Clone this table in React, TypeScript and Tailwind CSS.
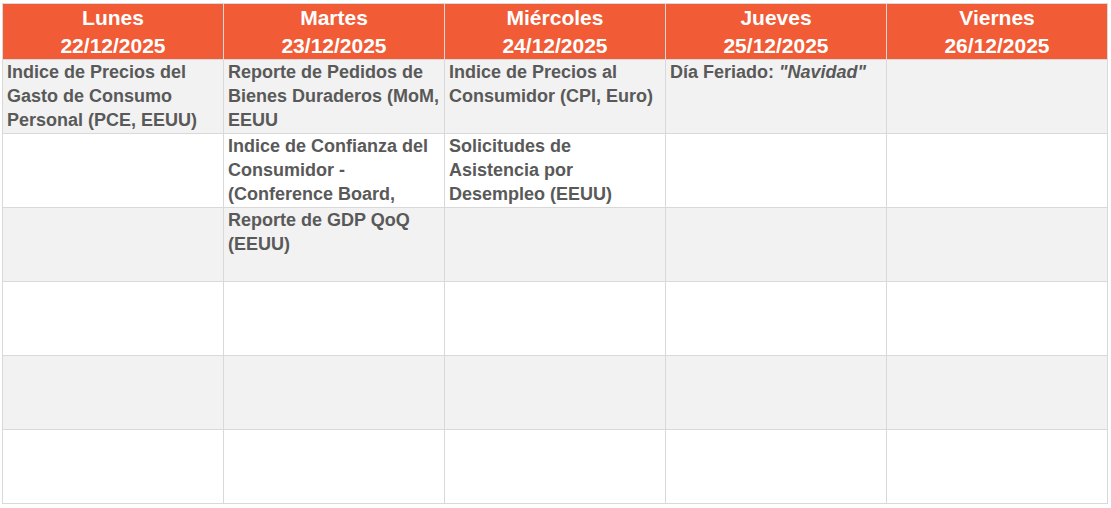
import { Fragment, type ReactNode } from "react";

type Day = { name: string; date: string };

const days: Day[] = [
  { name: "Lunes", date: "22/12/2025" },
  { name: "Martes", date: "23/12/2025" },
  { name: "Miércoles", date: "24/12/2025" },
  { name: "Jueves", date: "25/12/2025" },
  { name: "Viernes", date: "26/12/2025" },
];

// each cell is a list of lines, kept as in the sheet (cut off text included)
const rows: ReactNode[][][] = [
  [
    ["Indice de Precios del", "Gasto de Consumo", "Personal (PCE, EEUU)"],
    ["Reporte de Pedidos de", "Bienes Duraderos (MoM,", "EEUU"],
    ["Indice de Precios al", "Consumidor (CPI, Euro)"],
    [
      <>
        Día Feriado: <span className="italic">"Navidad"</span>
      </>,
    ],
    [],
  ],
  [
    [],
    ["Indice de Confianza del", "Consumidor -", "(Conference Board,"],
    ["Solicitudes de", "Asistencia por", "Desempleo (EEUU)"],
    [],
    [],
  ],
  [[], ["Reporte de GDP QoQ", "(EEUU)"], [], [], []],
  [[], [], [], [], []],
  [[], [], [], [], []],
  [[], [], [], [], []],
];

export default function App() {
  return (
    <div className="min-h-screen bg-white pt-[3px] pl-[2px] font-['Liberation_Sans',Arial,sans-serif]">
      <div className="grid w-fit grid-cols-[repeat(5,221px)] border-l border-t border-[#d9d9d9]">
        {days.map((d) => (
          <div
            key={d.name}
            className="h-[56px] border-r border-b border-[#d9d9d9] bg-[#f15b36] text-center text-[21px] font-bold leading-[28px] text-white"
          >
            <div>{d.name}</div>
            <div>{d.date}</div>
          </div>
        ))}

        {rows.map((row, r) => (
          <Fragment key={r}>
            {row.map((lines, c) => (
              <div
                key={c}
                className={`h-[74px] overflow-hidden border-r border-b border-[#d9d9d9] pl-[4px] text-[18px] font-bold leading-[24px] text-[#595959] ${
                  r % 2 === 0 ? "bg-[#f2f2f2]" : "bg-white"
                }`}
              >
                {lines.map((line, i) => (
                  <div key={i} className="whitespace-nowrap">
                    {line}
                  </div>
                ))}
              </div>
            ))}
          </Fragment>
        ))}
      </div>
    </div>
  );
}
